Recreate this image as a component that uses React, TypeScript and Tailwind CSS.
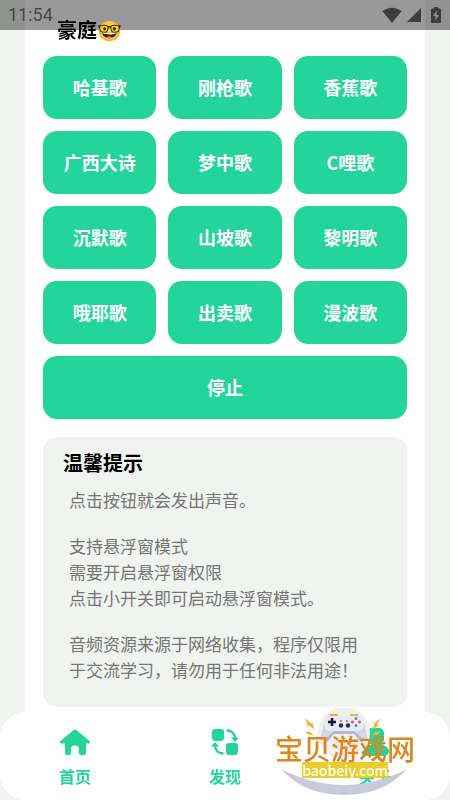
const songs = [
  '哈基歌', '刚枪歌', '香蕉歌',
  '广西大诗', '梦中歌', 'C哩歌',
  '沉默歌', '山坡歌', '黎明歌',
  '哦耶歌', '出卖歌', '漫波歌',
];

function StatusBar() {
  return (
    <header className="fixed inset-x-0 top-0 z-10 flex h-[30px] items-center justify-between bg-black/40 px-2 font-['Roboto',sans-serif] text-[#454545]">
      <span className="text-lg">11:54</span>
      <div className="flex items-center gap-1">
        <svg className="h-4 w-5" viewBox="0 0 20 16" fill="#3d3d3d">
          <path d="M10 16 .5 4.2C3 2 6.3 .8 10 .8s7 1.200 9.500 3.400z" />
        </svg>
        <svg className="h-4 w-4" viewBox="0 0 16 16" fill="#3d3d3d">
          <path d="M15 1v14H1z" />
        </svg>
        <svg className="ml-1 h-4 w-3" viewBox="0 0 12 16">
          <path d="M4 0h4v1.500h2q1 0 1 1V15q0 1-1 1H2q-1 0-1-1V2.500q0-1 1-1h2z" fill="#3d3d3d" />
          <path d="M7 3.500 3 9h2.500v4.500L9 8H6.500z" fill="#929292" />
        </svg>
      </div>
    </header>
  );
}

function HomeIcon() {
  return (
    <svg className="h-8 w-8" viewBox="0 0 32 32" fill="#23d49b">
      <path d="M14.400 4.200q1.600-1.400 3.200 0L30.500 15c1 1 .5 2.500-.8 2.500H27V27q0 2-2 2h-3q-2 0-2-2v-4.500q0-3-4-3t-4 3V27q0 2-2 2H8q-2 0-2-2v-9.500H2.300c-1.300 0-1.800-1.500-.8-2.500z" />
    </svg>
  );
}

function DiscoverIcon() {
  return (
    <svg className="h-8 w-8" viewBox="0 0 32 32" fill="#23d49b">
      <rect x="3" y="3" width="12" height="12" rx="3" />
      <rect x="17" y="17" width="12" height="12" rx="3" />
      <path d="M17.500 4.500c5 0 8.500 3 8.500 8M14.500 27.500c-5 0-8.500-3-8.500-8" fill="none" stroke="#23d49b" strokeWidth="2.400" />
      <path d="M22 11.500h8L26 16zM2 20.500h8L6 16z" />
    </svg>
  );
}

function AboutIcon() {
  return (
    <svg className="h-8 w-8" viewBox="0 0 32 32" fill="#23d49b">
      <rect x="7" y="2" width="18" height="16" rx="5" />
      <path d="M8 19h16q6 2 6 6 0 5-6 5H8q-6 0-6-5 0-4 6-6z" />
    </svg>
  );
}

function Watermark() {
  return (
    <div className="pointer-events-none fixed right-[35px] bottom-0 z-20 h-[92px] w-[140px]">
      <svg className="absolute inset-0 h-full w-full" viewBox="0 0 140 92">
        <circle cx="69" cy="25" r="26" fill="#f0f0f0" />
        <path d="M6 61q63 32 126 0Q109 87 69 87T6 61z" fill="#c9cbd8" />
        <path d="M55 6h8v3h-8zM75 6h8v3h-8z" fill="#e8b04a" />
        <path d="M52 18h34l3 14q-2 4-5 0l-5-6H59l-5 6q-3 4-5 0z" fill="#b7b9c6" />
        <path d="M57 8h24q6 0 8 7l3 13q0 5-4 3l-9-8H59l-9 8q-4 2-4-3l3-13q2-7 8-7z" fill="#d5d7e3" />
        <path d="M57 8h24q8 0 8 7t-8 8H57q-8 0-8-8t8-7z" fill="#e9eaf3" />
        <path d="M53 14h8M57 10v8" stroke="#171d31" strokeWidth="2.600" />
        <circle cx="66" cy="17.500" r="2.200" fill="#263145" />
        <circle cx="73" cy="17.500" r="2.200" fill="#263145" />
        <circle cx="66" cy="13" r="1" fill="#d9485c" />
        <circle cx="72" cy="13" r="1" fill="#d9485c" />
        <circle cx="81" cy="10.500" r="1.500" fill="#2f9bd0" />
        <circle cx="81" cy="17.500" r="1.500" fill="#2f9bd0" />
        <circle cx="77.500" cy="14" r="1.500" fill="#e35166" />
        <circle cx="84.500" cy="14" r="1.500" fill="#e35166" />
        <path d="m31 11 5 5 1-1 2 6-5-4-1 1zM31 24l4 0 3 3-5-1zM105 11l-6 5 1 1-3 4 6-3-1-2zM105 24l-5 0-2 3 5-1z" fill="#f2b52b" stroke="#f2b52b" strokeWidth=".7" />
      </svg>
      <div className="relative pt-[26px] text-center">
        <p className="text-[28px] leading-7 font-medium whitespace-nowrap text-[#df861c]">宝贝游戏网</p>
        <p className="mx-auto w-[86px] bg-[#e9ce2e] text-sm leading-4 font-medium text-white">baobeiy.com</p>
      </div>
    </div>
  );
}

const tabs = [
  { label: '首页', Icon: HomeIcon },
  { label: '发现', Icon: DiscoverIcon },
  { label: '关于', Icon: AboutIcon },
];

export default function App() {
  return (
    <div className="min-h-screen bg-[#f1f3f1] font-['Noto_Sans_CJK_SC',sans-serif]">
      <StatusBar />
      <main className="mx-[25px] min-h-screen bg-white px-[18px] pt-4 pb-[92px]">
        <div className="relative z-10 pl-[14px]">
          <h1 className="text-xl leading-7 font-bold text-black">豪庭🤓</h1>
        </div>
        <div className="mt-3 grid grid-cols-3 gap-3">
          {songs.map((song) => (
            <button key={song} className="h-[63px] rounded-[14px] bg-[#23d49b] pb-[2px] text-lg font-bold text-white">
              {song}
            </button>
          ))}
          <button className="col-span-3 h-[63px] rounded-[14px] bg-[#23d49b] pb-[2px] text-lg font-bold text-white">
            停止
          </button>
        </div>
        <section className="mt-[18px] rounded-[14px] bg-[#f1f3f1] px-5 pt-3 pb-6">
          <h2 className="text-xl leading-7 font-bold text-black">温馨提示</h2>
          <div className="mt-[10px] space-y-5 pl-[6px] text-[17px] leading-[26px] text-[#757575]">
            <p>点击按钮就会发出声音。</p>
            <p>
              支持悬浮窗模式<br />
              需要开启悬浮窗权限<br />
              点击小开关即可启动悬浮窗模式。
            </p>
            <p>音频资源来源于网络收集，程序仅限用<br />于交流学习，请勿用于任何非法用途！</p>
          </div>
        </section>
      </main>
      <nav className="fixed inset-x-0 bottom-0 grid h-[88px] grid-cols-3 rounded-[26px] bg-white">
        {tabs.map(({ label, Icon }) => (
          <a key={label} href="#" className="flex flex-col items-center pt-[14px] text-base leading-6 font-bold text-[#23d49b]">
            <Icon />
            <span className="mt-[6px]">{label}</span>
          </a>
        ))}
      </nav>
      <Watermark />
    </div>
  );
}
